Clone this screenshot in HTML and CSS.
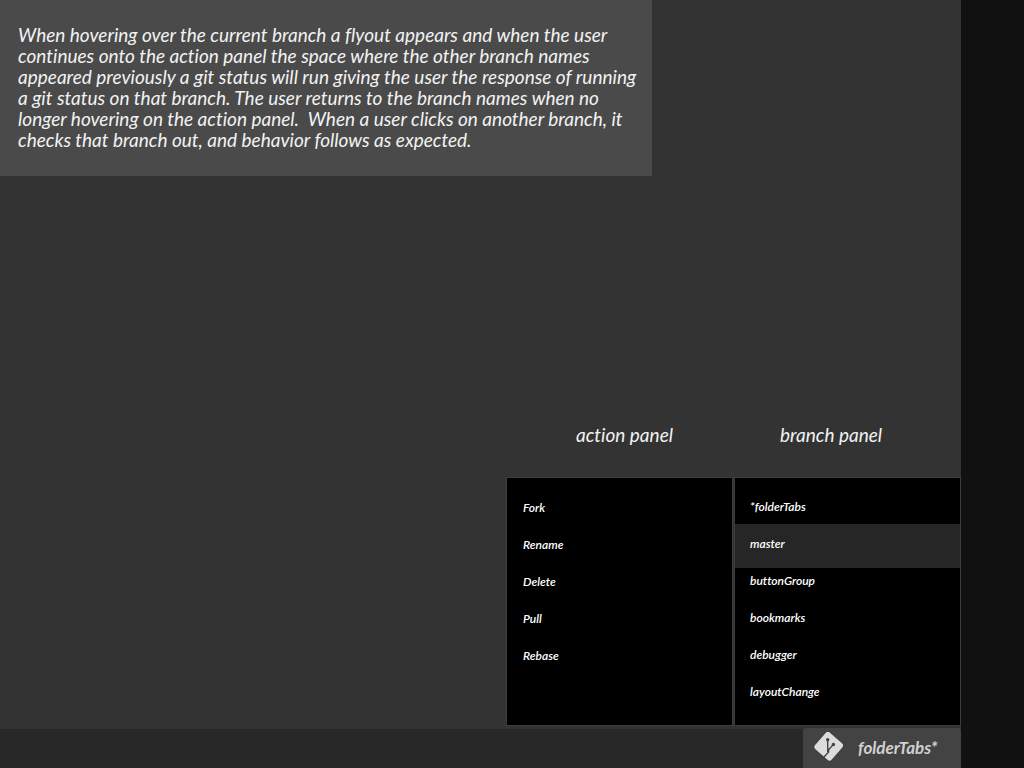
FILE: index.html
```
<!DOCTYPE html>
<html lang="en">
<head>
<meta charset="utf-8">
<title>Branch flyout</title>
<link rel="stylesheet" href="styles.css">
</head>
<body>
<div class="app">
  <main class="workspace">
    <p class="note">When hovering over the current branch a flyout appears and when the user<br>continues onto the action panel the space where the other branch names<br>appeared previously a git status will run giving the user the response of running<br>a git status on that branch. The user returns to the branch names when no<br>longer hovering on the action panel.&nbsp; When a user clicks on another branch, it<br>checks that branch out, and behavior follows as expected.</p>
    <div class="flyout">
      <section class="column">
        <h2 class="heading heading-action">action panel</h2>
        <ul class="panel panel-action">
          <li><button class="item" type="button">Fork</button></li>
          <li><button class="item" type="button">Rename</button></li>
          <li><button class="item" type="button">Delete</button></li>
          <li><button class="item" type="button">Pull</button></li>
          <li><button class="item" type="button">Rebase</button></li>
        </ul>
      </section>
      <section class="column">
        <h2 class="heading heading-branch">branch panel</h2>
        <ul class="panel panel-branch">
          <li><button class="item" type="button">*folderTabs</button></li>
          <li class="active"><button class="item" type="button">master</button></li>
          <li><button class="item" type="button">buttonGroup</button></li>
          <li><button class="item" type="button">bookmarks</button></li>
          <li><button class="item" type="button">debugger</button></li>
          <li><button class="item" type="button">layoutChange</button></li>
        </ul>
      </section>
    </div>
    <footer class="statusbar">
      <button class="current" type="button">
        <svg class="logo" viewBox="0 0 30 30" aria-hidden="true">
          <rect x="3.7" y="3.2" width="22" height="22" rx="3" transform="rotate(41 14.7 14.2)" fill="#dcdcdc"/>
          <path d="M13.7 7.8V20M19.2 12.6L14.6 17.8V20L9.6 25.4" fill="none" stroke="#434343" stroke-width="1.4"/>
          <circle cx="13.7" cy="7.8" r="1.7" fill="#434343"/>
          <circle cx="19.4" cy="12.5" r="1.7" fill="#434343"/>
        </svg>
        <span>folderTabs*</span>
      </button>
    </footer>
  </main>
  <aside class="gutter"></aside>
</div>
</body>
</html>
```
FILE: styles.css
```
* { box-sizing: border-box; }
body {
  margin: 0;
  background: #333;
  color: #f2f2f2;
  font-family: Lato, "Open Sans", sans-serif;
  font-style: italic;
  font-variant-ligatures: none;
}
.app { display: flex; min-height: 100vh; }
.workspace {
  flex: 1;
  display: flex;
  flex-direction: column;
}
.gutter { width: 63px; background: #111; }
.note {
  align-self: flex-start;
  margin: 0;
  padding: 24px 16px 26px 18px;
  background: #4a4a4a;
  font-size: 19px;
  line-height: 21px;
}
.flyout {
  display: flex;
  align-self: flex-end;
  gap: 1px;
  margin-top: auto;
  margin-bottom: 3px;
}
.column { width: 227px; display: flex; flex-direction: column; }
.heading {
  margin: 0 0 31px;
  font-size: 19px;
  font-weight: 400;
  line-height: 22px;
}
.heading-action { padding-left: 70px; }
.heading-branch { padding-left: 46px; }
.panel {
  flex: 1;
  margin: 0;
  list-style: none;
  background: #000;
  border: 1px solid #3d3d3d;
}
.panel-action { padding: 11px 0 0; }
.panel-branch { padding: 10px 0 15px; }
.item {
  display: block;
  width: 100%;
  height: 37px;
  padding: 0 16px;
  border: 0;
  background: none;
  color: #fff;
  font: inherit;
  font-size: 12px;
  font-weight: 600;
  text-align: left;
}
.panel-branch .item { padding: 0 15px; }
.active {
  margin: -1px 0 -6px;
  padding: 1px 0 6px;
  background: #262626;
}
.statusbar {
  display: flex;
  justify-content: flex-end;
  height: 39px;
  background: #282828;
}
.current {
  display: flex;
  align-items: center;
  gap: 14px;
  width: 158px;
  height: 40px;
  margin-top: -1px;
  padding: 0 0 2px 11px;
  border: 0;
  border-radius: 3px 3px 0 0;
  background: #434343;
  color: #d0d0d0;
  font: inherit;
  font-size: 17px;
  font-weight: 700;
}
.logo { width: 30px; height: 30px; }
```
